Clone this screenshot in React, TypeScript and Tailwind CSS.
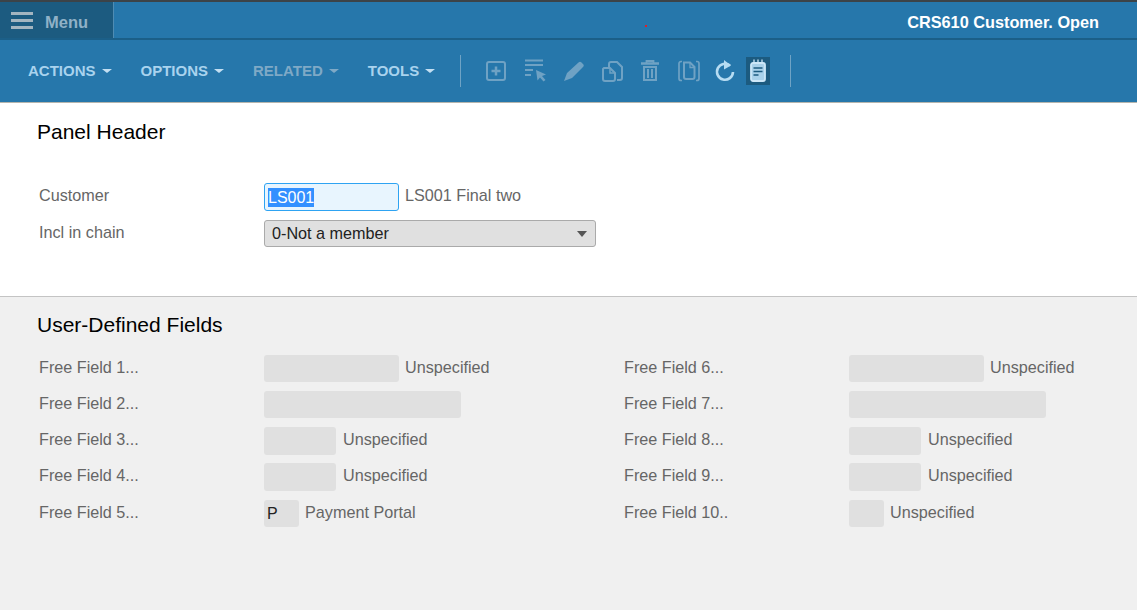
import React from "react";

const font = "font-['Liberation_Sans',Arial,sans-serif]";

const MenuButton = ({ label, disabled }: { label: string; disabled?: boolean }) => (
  <div
    className={`flex items-center gap-[6px] text-[15px] font-bold ${
      disabled ? "text-[#7fa9c6]" : "text-[#a9d3ee]"
    }`}
  >
    <span>{label}</span>
    <span
      className={`w-0 h-0 border-x-[5px] border-x-transparent border-t-[4px] ${
        disabled ? "border-t-[#7fa9c6]" : "border-t-[#c3dff2]"
      }`}
    />
  </div>
);

const ToolIcon = ({ children, active }: { children: React.ReactNode; active?: boolean }) => (
  <div className={`w-[24px] h-[28px] flex items-center justify-center ${active ? "bg-[#1c5b80]" : ""}`}>
    <svg width="24" height="24" viewBox="0 0 24 24" fill="none" stroke="currentColor" strokeWidth="2">
      {children}
    </svg>
  </div>
);

const fields = [
  [
    { label: "Free Field 1...", w: "w-[135px]", text: "Unspecified" },
    { label: "Free Field 2...", w: "w-[197px]", text: "" },
    { label: "Free Field 3...", w: "w-[72px]", text: "Unspecified", h: "h-[28px]", gap: "ml-[7px]" },
    { label: "Free Field 4...", w: "w-[72px]", text: "Unspecified", h: "h-[28px]", gap: "ml-[7px]" },
    { label: "Free Field 5...", w: "w-[35px]", text: "Payment Portal", value: "P", row: "mt-[1px]" },
  ],
  [
    { label: "Free Field 6...", w: "w-[135px]", text: "Unspecified" },
    { label: "Free Field 7...", w: "w-[197px]", text: "" },
    { label: "Free Field 8...", w: "w-[72px]", text: "Unspecified", h: "h-[28px]", gap: "ml-[7px]" },
    { label: "Free Field 9...", w: "w-[72px]", text: "Unspecified", h: "h-[28px]", gap: "ml-[7px]" },
    { label: "Free Field 10..", w: "w-[35px]", text: "Unspecified", row: "mt-[1px]" },
  ],
];

export default function App() {
  return (
    <div className={`${font} relative w-[1137px] h-[610px] overflow-hidden bg-[#f0f0f0] flex flex-col`}>
      {/* top bar */}
      <div className="h-[40px] shrink-0 bg-[#2677ab] border-t-2 border-t-[#3c4348] border-b-2 border-b-[#1b5f88] flex items-stretch justify-between">
        <div className="w-[114px] bg-[#1c5b80] border-r border-r-[#4f8cb3] flex items-center pl-[11px] gap-[12px]">
          <div className="flex flex-col gap-[4px]">
            <div className="w-[22px] h-[3px] bg-[#a3b5c0]" />
            <div className="w-[22px] h-[3px] bg-[#a3b5c0]" />
            <div className="w-[22px] h-[3px] bg-[#a3b5c0]" />
          </div>
          <span className="text-[16.500px] font-bold text-[#8fb1c7] pt-[4px]">Menu</span>
        </div>
        <div className="pr-[38px] pt-[4px] flex items-center text-[16.300px] font-bold text-white">CRS610 Customer. Open</div>
      </div>
      <div className="absolute left-[645px] top-[25px] w-[2px] h-[2px] bg-[#e0202a]" />

      {/* toolbar */}
      <div className="h-[62px] shrink-0 bg-[#2677ab] flex items-center pl-[28px]">
        <div className="flex items-center gap-[29px]">
          <MenuButton label="ACTIONS" />
          <MenuButton label="OPTIONS" />
          <MenuButton label="RELATED" disabled />
          <MenuButton label="TOOLS" />
        </div>
        <div className="w-px h-[32px] bg-[#6fa3c5] ml-[25px]" />
        <div className="flex items-center ml-[23px] text-[#6fa2c4]">
          <ToolIcon>
            <rect x="3" y="3" width="18" height="18" rx="2" />
            <path d="M12 7.5v9M7.5 12h9" strokeWidth="2.5" />
          </ToolIcon>
          <div className="ml-[15px]">
            <ToolIcon>
              <path d="M2 1.500h18M2 6h18M2 11h8M2 16h6" strokeWidth="1.800" />
              <path d="M13 11l10 4.500-4 1.500 3.500 4-2 1.500-3.500-4-2.500 3z" fill="currentColor" stroke="none" />
            </ToolIcon>
          </div>
          <div className="ml-[15px]">
            <ToolIcon>
              <path d="M2 22l3-8L16.500 3.500c1-1 2-1 3 0l1.500 1.500c1 1 1 2 0 3L10 19z" fill="currentColor" stroke="none" />
            </ToolIcon>
          </div>
          <div className="ml-[14px]">
            <ToolIcon>
              <path d="M9 8V5a2 2 0 0 1 2-2h6l5 5v11a2 2 0 0 1-2 2h-3" />
              <path d="M4 9h6l5 5v6a2 2 0 0 1-2 2H5a2 2 0 0 1-2-2V10z" />
              <path d="M10 9v5h5" strokeWidth="1.500" />
            </ToolIcon>
          </div>
          <div className="ml-[14px]">
            <ToolIcon>
              <path d="M3 4.500h18" strokeWidth="2.500" />
              <path d="M8.500 4V2h7v2" strokeWidth="1.800" />
              <path d="M6 8h12v13H6z" />
              <path d="M10 10v9M14 10v9" strokeWidth="2" />
            </ToolIcon>
          </div>
          <div className="ml-[15px]">
            <ToolIcon>
              <path d="M5 2.500H4a2 2 0 0 0-2 2v15a2 2 0 0 0 2 2h1M19 2.500h1a2 2 0 0 1 2 2v15a2 2 0 0 1-2 2h-1" strokeWidth="1.700" />
              <path d="M7 3.500h6l4.500 4.500v10a2 2 0 0 1-2 2H9a2 2 0 0 1-2-2z" />
              <path d="M13 4v4.500h4.500" strokeWidth="1.300" />
            </ToolIcon>
          </div>
          <div className="text-[#b6dcf2] ml-[12px]">
            <ToolIcon>
              <path d="M17 6.500A8 8 0 1 0 20 13" strokeWidth="2.600" />
              <path d="M11 1l7 5.500-7 4z" fill="currentColor" stroke="none" />
            </ToolIcon>
          </div>
          <div className="text-[#cde7f8] ml-[9px]">
            <ToolIcon active>
              <rect x="5" y="4" width="14" height="18" rx="2" fill="#a9d1ea" strokeWidth="1.800" />
              <path d="M8 0.500v3M12 0.500v3M16 0.500v3" strokeWidth="1.300" />
              <path d="M7.500 9h9M7.500 12.500h9M7.500 16h5" stroke="#1c5b80" strokeWidth="1.500" />
            </ToolIcon>
          </div>
        </div>
        <div className="w-px h-[32px] bg-[#6fa3c5] ml-[20px]" />
      </div>

      {/* panel header */}
      <div className="h-[195px] shrink-0 bg-white border-t border-t-[#b5b5ad] border-b border-b-[#c4c4c4] pl-[37px] pt-[17px]">
        <h2 className="text-[21px] leading-[24px] text-black">Panel Header</h2>
        <div className="mt-[39px] pl-[2px] flex flex-col gap-[9px] text-[16.200px] text-[#666666]">
          <div className="flex items-start h-[28px]">
            <span className="w-[225px] leading-[24px]">Customer</span>
            <div className="w-[135px] h-[28px] border border-[#2ea3f2] rounded-[3px] bg-[#e8f5fe] pl-[3px] flex items-center text-[16px]">
              <span className="bg-[#3390ff] text-white leading-[19px]">LS001</span>
            </div>
            <span className="ml-[6px] leading-[24px]">LS001 Final two</span>
          </div>
          <div className="flex items-start h-[27px]">
            <span className="w-[225px] leading-[24px]">Incl in chain</span>
            <div className="w-[332px] h-[27px] border border-[#aaaaaa] rounded-[3px] bg-[#e0e0e0] pl-[7px] pr-[8px] flex items-center justify-between text-[#222222]">
              <span>0-Not a member</span>
              <span className="w-0 h-0 border-x-[5.500px] border-x-transparent border-t-[6px] border-t-[#555555]" />
            </div>
          </div>
        </div>
      </div>

      {/* user defined fields */}
      <div className="flex-1 pl-[37px] pt-[16px]">
        <h2 className="text-[21px] leading-[24px] text-black">User-Defined Fields</h2>
        <div className="mt-[18px] pl-[2px] flex text-[16.200px] text-[#666666]">
          {fields.map((col, c) => (
            <div key={c} className="w-[585px] shrink-0 flex flex-col">
              {col.map((f) => (
                <div key={f.label} className={`flex items-start h-[36px] ${f.row ?? ""}`}>
                  <span className="w-[225px] leading-[24px]">{f.label}</span>
                  <div
                    className={`${f.w} ${f.h ?? "h-[27px]"} rounded-[3px] bg-[#e0e0e0] pl-[3px] flex items-center text-[16px] text-[#222222]`}
                  >
                    {f.value}
                  </div>
                  {f.text && <span className={`${f.gap ?? "ml-[6px]"} leading-[24px]`}>{f.text}</span>}
                </div>
              ))}
            </div>
          ))}
        </div>
      </div>
    </div>
  );
}
